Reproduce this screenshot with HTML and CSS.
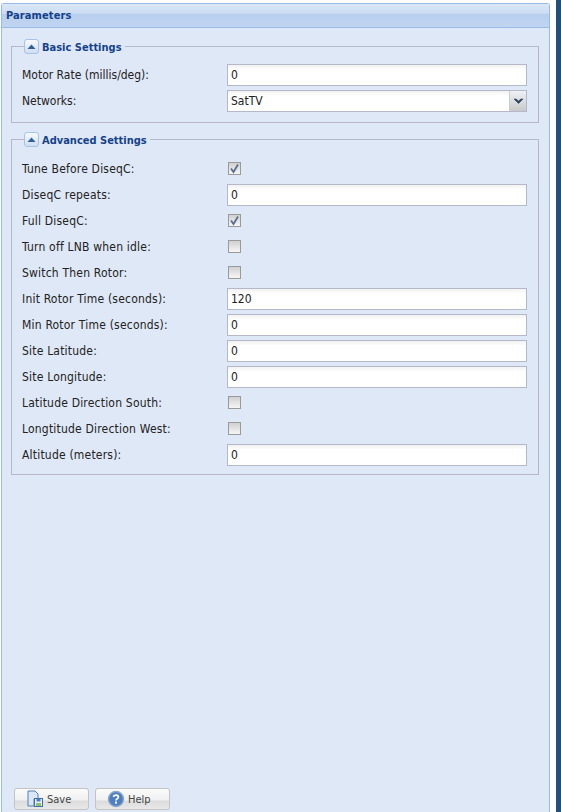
FILE: index.html
```html
<!DOCTYPE html>
<html lang="en">
<head>
<meta charset="utf-8">
<title>Parameters</title>
<link rel="stylesheet" href="styles.css">
</head>
<body>
<div class="page">
  <main class="panel">
    <header class="panel-head">Parameters</header>
    <div class="panel-body">
      <div class="forms">
        <fieldset class="group group-basic">
          <legend class="group-legend"><span class="toggle"><svg width="9" height="6" viewBox="0 0 9 6"><path d="M4.5 0.5 L8.5 5 H0.5 Z" fill="#2f5f9e"/></svg></span><span class="legend-text">Basic Settings</span></legend>
          <div class="row"><label class="lbl">Motor Rate (millis/deg):</label><div class="input">0</div></div>
          <div class="row"><label class="lbl">Networks:</label><div class="input select"><span class="select-val">SatTV</span><span class="select-btn"><svg width="11" height="7" viewBox="0 0 11 7"><path d="M1 1 L5.5 5.5 L10 1 L8 1 L5.5 3 L3 1 Z" fill="#2c4560" stroke="#2c4560" stroke-width=".6"/></svg></span></div></div>
        </fieldset>
        <fieldset class="group group-adv">
          <legend class="group-legend"><span class="toggle"><svg width="9" height="6" viewBox="0 0 9 6"><path d="M4.5 0.5 L8.5 5 H0.5 Z" fill="#2f5f9e"/></svg></span><span class="legend-text">Advanced Settings</span></legend>
          <div class="row"><label class="lbl">Tune Before DiseqC:</label><span class="check"><svg width="13" height="13" viewBox="0 0 13 13"><path d="M3 6.5 L5.5 10 L10 2.5" fill="none" stroke="#5a6f8f" stroke-width="1.8"/></svg></span></div>
          <div class="row"><label class="lbl">DiseqC repeats:</label><div class="input">0</div></div>
          <div class="row"><label class="lbl">Full DiseqC:</label><span class="check"><svg width="13" height="13" viewBox="0 0 13 13"><path d="M3 6.5 L5.5 10 L10 2.5" fill="none" stroke="#5a6f8f" stroke-width="1.8"/></svg></span></div>
          <div class="row"><label class="lbl">Turn off LNB when idle:</label><span class="check"></span></div>
          <div class="row"><label class="lbl">Switch Then Rotor:</label><span class="check"></span></div>
          <div class="row"><label class="lbl">Init Rotor Time (seconds):</label><div class="input">120</div></div>
          <div class="row"><label class="lbl">Min Rotor Time (seconds):</label><div class="input">0</div></div>
          <div class="row"><label class="lbl">Site Latitude:</label><div class="input">0</div></div>
          <div class="row"><label class="lbl">Site Longitude:</label><div class="input">0</div></div>
          <div class="row"><label class="lbl">Latitude Direction South:</label><span class="check"></span></div>
          <div class="row"><label class="lbl">Longtitude Direction West:</label><span class="check"></span></div>
          <div class="row"><label class="lbl">Altitude (meters):</label><div class="input">0</div></div>
        </fieldset>
      </div>
      <footer class="actions">
        <button class="btn" type="button"><svg class="btn-icon" width="18" height="18" viewBox="0 0 18 18"><path d="M2 1 H9 L12 4 V9 H8 V16 H2 Z" fill="#dbe7f6" stroke="#4f7fb8"/><rect x="8.5" y="8.5" width="8" height="8" fill="#e8f0f8" stroke="#3d6ea8"/><rect x="10.5" y="9" width="4" height="2.5" fill="#4f7fb8"/><rect x="10" y="13" width="5" height="3" fill="#8fc06a"/></svg><span>Save</span></button>
        <button class="btn" type="button"><svg class="btn-icon" width="18" height="18" viewBox="0 0 18 18"><circle cx="9" cy="9" r="7.5" fill="#4d7fc0" stroke="#8aa6c8" stroke-width="1.4"/><path d="M6.6 7 C6.6 4.4 11.4 4.4 11.4 7 C11.4 8.8 9 8.6 9 10.5" fill="none" stroke="#fff" stroke-width="1.7"/><rect x="8" y="11.6" width="2" height="2" fill="#fff"/></svg><span>Help</span></button>
      </footer>
    </div>
  </main>
  <div class="gutter"></div>
  <div class="edge"></div>
</div>
</body>
</html>
```
FILE: styles.css
```css
* { box-sizing: border-box; }
html, body { margin: 0; height: 100%; background: #fff; }
body { overflow: hidden; font-family: "DejaVu Sans Condensed", "DejaVu Sans", sans-serif; font-size: 12px; color: #222; }
.page { display: flex; height: 812px; padding-left: 1px; }
.panel { width: 549px; margin-top: 3px; display: flex; flex-direction: column; border: 1px solid #99bbe8; border-bottom: 0; border-radius: 3px 3px 0 0; background: #dfe8f6; }
.panel-head { height: 24px; padding: 3px 4px 0 4px; font-weight: bold; font-size: 11px; letter-spacing: 0.1px; color: #15428b; line-height: 17px; background: linear-gradient(#dae7f6 0, #cdddf3 40%, #b8cfee 45%, #c0d5f0 100%); border-bottom: 1px solid #99bbe8; }
.panel-body { flex: 1; display: flex; flex-direction: column; justify-content: space-between; padding: 11px 10px 2px 9px; }
.forms { display: flex; flex-direction: column; gap: 9px; }
.group { margin: 0; border: 1px solid #b5b8c8; padding: 8px 11px 0 10px; min-width: 0; }
.group-basic { height: 84px; }
.group-adv { height: 343px; padding-top: 9px; }
.group-adv .lbl { letter-spacing: 0.2px; }
.group-legend { padding: 0 3px 0 0; margin-left: 2px; display: flex; align-items: center; gap: 3px; height: 15px; font-weight: bold; font-size: 11px; color: #15428b; }
.toggle { width: 15px; height: 15px; display: flex; align-items: center; justify-content: center; border: 1px solid #a9c3e6; border-radius: 3px; background: linear-gradient(#f7fafe, #cfdef3); }
.legend-text { line-height: 15px; height: 16px; padding-top: 1px; }
.row { display: flex; align-items: center; height: 26px; }
.lbl { width: 205px; flex: none; line-height: 16px; }
.input { width: 300px; height: 22px; border: 1px solid #b5b8c8; background: linear-gradient(#f2f2f2 0, #fff 5px); padding-left: 3px; line-height: 20px; color: #222; display: flex; }
.select { padding-left: 0; }
.select-val { flex: 1; padding-left: 3px; }
.select-btn { width: 17px; display: flex; align-items: center; justify-content: center; border-left: 1px solid #ccc; background: linear-gradient(#eef1f6, #c9c9c9); }
.check { width: 13px; height: 13px; margin: -2px 0 0 1px; border: 1px solid #9a9a9a; background: linear-gradient(#d0d0d0, #f6f6f6); display: block; }
.check svg { display: block; margin: -1px; }
.actions { display: flex; gap: 6px; padding-left: 3px; }
.btn { width: 75px; height: 22px; padding: 0 0 0 11px; display: flex; align-items: center; gap: 3px; font-family: inherit; font-size: 11px; color: #444; border: 1px solid #c4c4c4; border-radius: 3px; background: linear-gradient(#fbfbfb 0, #f0f0f0 55%, #dcdcdc 60%, #e8e8e8 100%); }
.btn-icon { flex: none; }
.gutter { width: 6px; background: #fff; }
.edge { flex: 1; background: #215078; }
```
